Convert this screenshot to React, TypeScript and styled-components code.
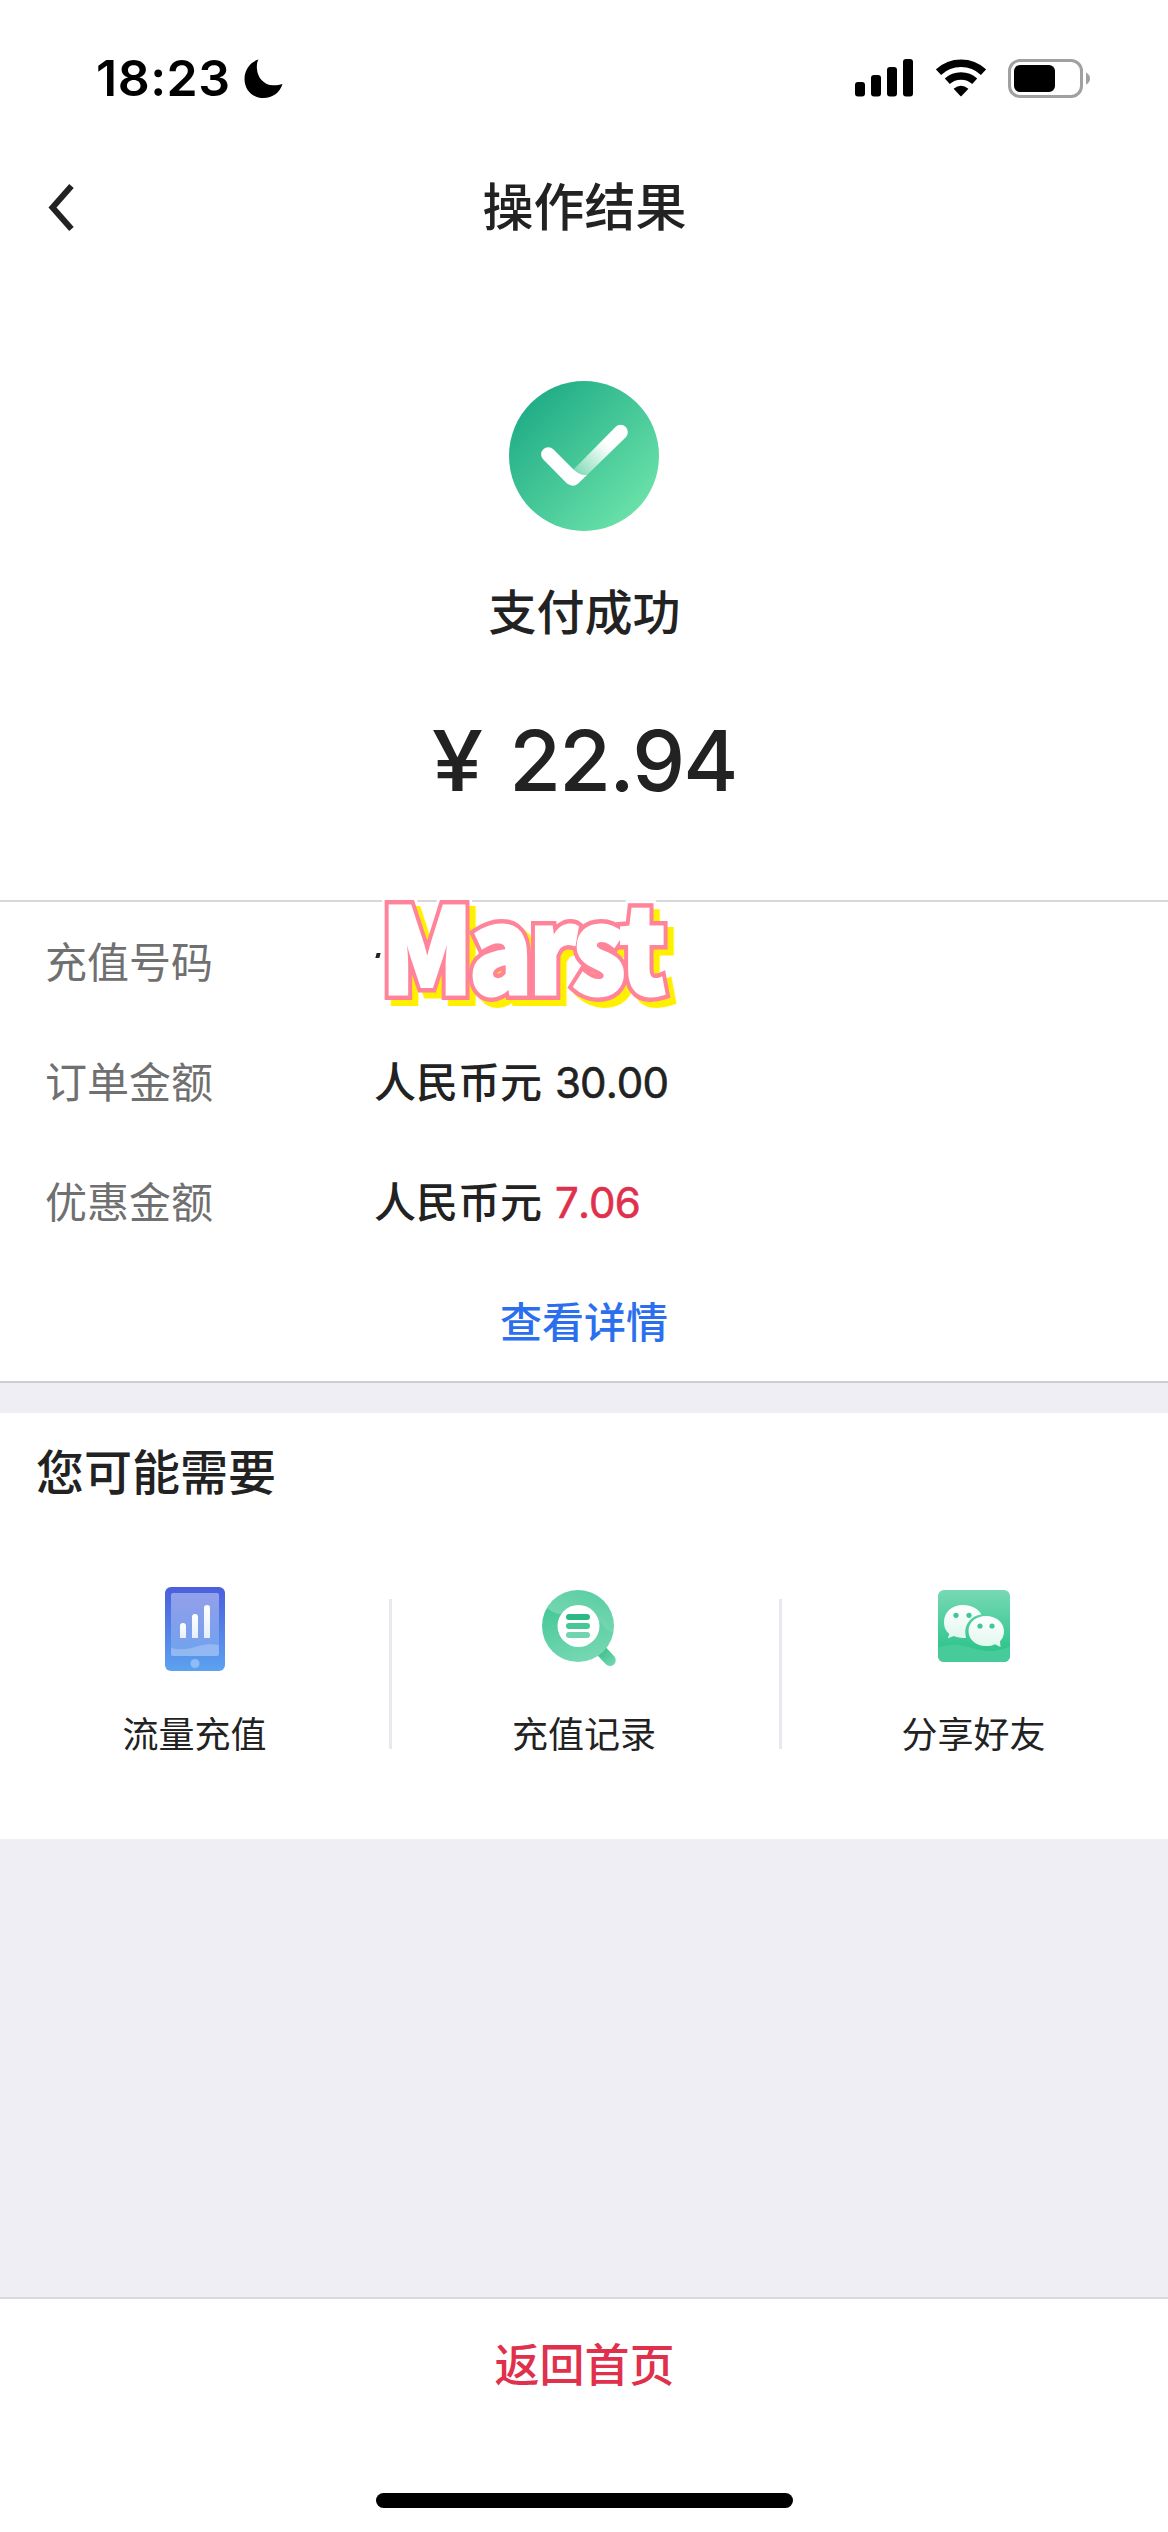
import React from 'react';
import styled, { createGlobalStyle } from 'styled-components';

const GlobalStyle = createGlobalStyle`
  html, body { margin: 0; padding: 0; background: #fff; }
  * { box-sizing: border-box; }
  body { font-family: Inter, "Noto Sans CJK SC", sans-serif; color: #222; }
`;

const Page = styled.div`
  width: 1168px;
  height: 2532px;
  display: flex;
  flex-direction: column;
  background: #efeef4;
  overflow: hidden;
`;

const StatusBar = styled.header`
  height: 141px;
  padding: 15px 77px 0 96px;
  display: flex;
  align-items: center;
  justify-content: space-between;
  background: #fff;
  color: #000;
`;

const StatusGroup = styled.div<{ $gap: number }>`
  display: flex;
  align-items: center;
  gap: ${(p) => p.$gap}px;
`;

const Clock = styled.time`
  font-size: 50px;
  line-height: 60px;
  font-weight: 600;
  letter-spacing: 0.5px;
  width: 134px;
  white-space: nowrap;
`;

const NavBar = styled.nav`
  height: 132px;
  padding: 0 47px;
  display: grid;
  grid-template-columns: 60px 1fr 60px;
  align-items: center;
  background: #fff;
`;

const BackButton = styled.button`
  border: 0;
  padding: 0;
  height: 50px;
  background: none;
  display: flex;
`;

const Title = styled.h1`
  margin: 0;
  padding: 2px 0 0 1px;
  text-align: center;
  font-size: 51px;
  line-height: 60px;
  font-weight: 500;
`;

const Summary = styled.section`
  height: 627px;
  padding-top: 108px;
  display: flex;
  flex-direction: column;
  align-items: center;
  background: #fff;
`;

const ResultText = styled.div`
  margin-top: 52px;
  padding-left: 1px;
  font-size: 48px;
  line-height: 60px;
  font-weight: 500;
`;

const Amount = styled.div`
  margin-top: 68px;
  padding-left: 3px;
  font-size: 84px;
  line-height: 100px;
  font-weight: 500;
  letter-spacing: -1.8px;
  display: flex;
  gap: 30px;
`;

const Currency = styled.span`
  transform: scaleX(1.1);
`;

const Details = styled.section`
  height: 483px;
  border-top: 2px solid #d8d8dc;
  border-bottom: 2px solid #cdcdd3;
  background: #fff;
`;

const DetailRow = styled.div`
  height: 120px;
  padding: 2px 0 0 45px;
  display: grid;
  grid-template-columns: 329px 1fr;
  align-items: center;
  font-size: 42px;
  line-height: 60px;
`;

const Label = styled.span`
  color: #707070;
`;

const Value = styled.span`
  position: relative;
  display: flex;
  gap: 13px;
  font-weight: 500;
`;

const Figure = styled.span<{ $accent?: boolean }>`
  font-weight: 400;
  font-kerning: none;
  letter-spacing: -0.9px;
  -webkit-text-stroke: 0.6px currentColor;
  color: ${(p) => (p.$accent ? '#e0304c' : '#222')};
`;

const HiddenNumber = styled.i`
  width: 4px;
  height: 5px;
  margin: 20px 0 35px 2px;
  background: #222;
  transform: skewX(-15deg);
`;

const Sticker = styled.span`
  position: absolute;
  left: 7px;
  top: -60px;
  isolation: isolate;
  transform: scaleX(0.89);
  transform-origin: left center;
  font-family: "Noto Sans CJK SC", sans-serif;
  font-size: 118px;
  line-height: 140px;
  font-weight: 900;
  letter-spacing: -4.5px;
  color: #fff;
  stroke-linejoin: round;
  -webkit-text-stroke: 3px #fff;

  &::before,
  &::after {
    content: 'Marst';
    position: absolute;
    left: 0;
    top: 0;
    z-index: -1;
  }
  &::before {
    -webkit-text-stroke: 18px #fff;
  }
  &::after {
    -webkit-text-stroke: 12px #ff8399;
    filter: drop-shadow(7px 6px 0 #fff000);
  }
`;

const DetailLink = styled.a`
  height: 119px;
  padding-top: 3px;
  display: flex;
  align-items: center;
  justify-content: center;
  font-size: 42px;
  line-height: 60px;
  font-weight: 500;
  color: #2b6fee;
`;

const Suggestions = styled.section`
  height: 426px;
  margin-top: 30px;
  padding-top: 30px;
  background: #fff;
`;

const SectionTitle = styled.h2`
  margin: 0 0 0 36px;
  font-size: 48px;
  line-height: 60px;
  font-weight: 500;
`;

const ServiceGrid = styled.div`
  margin-top: 66px;
  display: grid;
  grid-template-columns: 389px 390px 389px;
  background:
    linear-gradient(#e8e8ef, #e8e8ef) 389px 30px / 3px 150px no-repeat,
    linear-gradient(#e8e8ef, #e8e8ef) 779px 30px / 3px 150px no-repeat;
`;

const Service = styled.div`
  display: flex;
  flex-direction: column;
  align-items: center;
  gap: 37px;
  height: 192px;
  padding-top: 18px;
`;

const ServiceName = styled.span`
  font-size: 36px;
  line-height: 54px;
`;

const ServiceIcon = styled.div`
  height: 84px;
  display: flex;
  align-items: center;
`;

const Footer = styled.footer`
  height: 235px;
  margin-top: auto;
  padding-top: 37px;
  border-top: 2px solid #d8d8de;
  display: flex;
  flex-direction: column;
  align-items: center;
  background: #fff;
`;

const HomeButton = styled.button`
  border: 0;
  padding: 0 0 0 1px;
  background: none;
  font: 500 45px/60px Inter, "Noto Sans CJK SC", sans-serif;
  color: #e0304c;
`;

const HomeIndicator = styled.div`
  width: 417px;
  height: 15px;
  margin-top: 97px;
  border-radius: 8px;
  background: #000;
`;

const Moon = () => (
  <svg width="39" height="39" viewBox="0 0 39 39">
    <path d="M14.5 .5C13 3 12.700 6 12.900 9.500C13.500 19 20 26 29 26.300C32.500 26.400 35.500 26 38.500 25C36 33.500 28.500 39 19.500 39C8.500 39 .5 31 .5 20C.5 11 6 3 14.500 .5Z" />
  </svg>
);

const Signal = () => (
  <svg width="58" height="38" viewBox="0 0 58 38">
    <rect x="0" y="23" width="10" height="14.500" rx="3" />
    <rect x="16" y="16" width="10" height="21.500" rx="3" />
    <rect x="32" y="8" width="10" height="29.500" rx="3" />
    <rect x="48" y="0" width="10" height="37.500" rx="3" />
  </svg>
);

const Wifi = () => (
  <svg width="50" height="38" viewBox="0 0 50 38">
    <g fill="none" stroke="#000">
      <path d="M2.500 13.200Q12 4.300 25 4.300T47.500 13.200" strokeWidth="7.600" />
      <path d="M11.300 22.200Q17 17 25 17T38.700 22.200" strokeWidth="7.400" />
    </g>
    <path d="M17.600 29.800Q25 23.500 32.400 29.800L25.600 37Q25 37.500 24.400 37Z" />
  </svg>
);

const Battery = () => (
  <svg width="83" height="39" viewBox="0 0 83 39">
    <rect x="1.500" y="1.500" width="72" height="36" rx="10.500" fill="none" stroke="#a0a0a0" strokeWidth="3" />
    <rect x="6" y="6" width="41" height="27" rx="6" />
    <path d="M78 13.500Q82 15.500 82 19.500T78 25.500Z" fill="#a0a0a0" />
  </svg>
);

const Chevron = () => (
  <svg width="30" height="50" viewBox="0 0 30 50">
    <path d="M24.500 4L5.500 25.500L24.500 47" fill="none" stroke="#222" strokeWidth="6" strokeLinejoin="miter" />
  </svg>
);

const SuccessMark = () => (
  <svg width="150" height="150" viewBox="0 0 150 150">
    <defs>
      <linearGradient id="disc" x1=".15" y1=".15" x2=".85" y2=".85">
        <stop offset="0" stopColor="#23ae88" />
        <stop offset="1" stopColor="#68e0a8" />
      </linearGradient>
      <linearGradient id="arm" gradientUnits="userSpaceOnUse" x1="100" y1="63" x2="70" y2="96">
        <stop offset="0" stopColor="#fff" />
        <stop offset=".15" stopColor="#fff" stopOpacity=".93" />
        <stop offset="1" stopColor="#fff" stopOpacity=".3" />
      </linearGradient>
    </defs>
    <circle cx="75" cy="75" r="75" fill="url(#disc)" />
    <path d="M106.500 46a7.200 7.200 0 0 1 10.300 10.200L77.500 94.500C73 96.200 67 93.500 64.500 88.500Z" fill="url(#arm)" />
    <path d="M34.300 68.300a7 7 0 0 1 10 0L64.500 88.500C68.500 92.500 73 94.700 78 93.900L69.500 102.200Q64 107 58 102.600L34.300 78.600a7.200 7.200 0 0 1 0-10.300Z" fill="#fff" />
  </svg>
);

const PhoneIcon = () => (
  <svg width="60" height="84" viewBox="0 0 60 84">
    <defs>
      <linearGradient id="phone" x1="0" y1="0" x2="0" y2="1">
        <stop offset="0" stopColor="#4b5edd" />
        <stop offset="1" stopColor="#5ca2ef" />
      </linearGradient>
      <linearGradient id="column" x1="0" y1="0" x2="0" y2="1">
        <stop offset="0" stopColor="#fff" />
        <stop offset="1" stopColor="#e7eefb" />
      </linearGradient>
      <linearGradient id="screen" x1="0" y1="0" x2="0" y2="1">
        <stop offset="0" stopColor="#fff" stopOpacity=".4" />
        <stop offset="1" stopColor="#fff" stopOpacity=".14" />
      </linearGradient>
    </defs>
    <rect width="60" height="84" rx="6" fill="url(#phone)" />
    <rect x="6" y="6" width="48" height="63" rx="2" fill="url(#screen)" />
    <path d="M6 61C18 64 27 61 34 59C42 56.500 48 57 54 58V67a2 2 0 0 1-2 2H8a2 2 0 0 1-2-2Z" fill="#fff" fillOpacity=".23" />
    <g fill="url(#column)">
      <path d="M15 51V39a3 3 0 0 1 6 0V51Z" />
      <path d="M27 51V30a3 3 0 0 1 6 0V51Z" />
      <path d="M39 51V21a3 3 0 0 1 6 0V51Z" />
    </g>
    <circle cx="30" cy="76.500" r="4.500" fill="#8ebcf4" />
  </svg>
);

const RecordIcon = () => (
  <svg width="84" height="84" viewBox="0 0 84 84">
    <defs>
      <linearGradient id="ring" x1=".3" y1="0" x2=".6" y2="1">
        <stop offset="0" stopColor="#3cc592" />
        <stop offset="1" stopColor="#78d8b4" />
      </linearGradient>
      <linearGradient id="handle" gradientUnits="userSpaceOnUse" x1="58" y1="62" x2="72" y2="78">
        <stop offset="0" stopColor="#38bd89" />
        <stop offset="1" stopColor="#75d8b2" />
      </linearGradient>
      <linearGradient id="shine" x1="0" y1="0" x2="1" y2="0">
        <stop offset="0" stopColor="#fff" stopOpacity=".24" />
        <stop offset="1" stopColor="#fff" stopOpacity=".08" />
      </linearGradient>
    </defs>
    <path d="M58 62.500L68 73.200" stroke="url(#handle)" strokeWidth="11.500" strokeLinecap="round" />
    <circle cx="36" cy="39" r="36" fill="url(#ring)" />
    <path d="M5 21A36 36 0 0 1 71.500 46Q63 43 58 35L20 27Q12 27 5 21Z" fill="url(#shine)" />
    <circle cx="36.500" cy="39" r="21" fill="#fff" />
    <rect x="24" y="27" width="24" height="6" rx="3" fill="#2cb985" />
    <rect x="24" y="36" width="24" height="6" rx="3" fill="#48c796" />
    <rect x="24" y="45" width="24" height="6" rx="3" fill="#70d5ae" />
  </svg>
);

const WechatIcon = () => (
  <svg width="72" height="84" viewBox="0 -3 72 84">
    <defs>
      <linearGradient id="tile" x1="0" y1="0" x2="0" y2="1">
        <stop offset="0" stopColor="#78d9b5" />
        <stop offset=".85" stopColor="#2dc48c" />
        <stop offset="1" stopColor="#2dc48c" />
      </linearGradient>
      <linearGradient id="bubble" x1="0" y1="0" x2="0" y2="1">
        <stop offset="0" stopColor="#fff" />
        <stop offset="1" stopColor="#e0f7ee" />
      </linearGradient>
    </defs>
    <rect width="72" height="72" rx="6" fill="url(#tile)" />
    <path d="M0 57.500C12 52.500 24 55 36 58.500C48 62 60 62 72 56.500V66a6 6 0 0 1-6 6H6a6 6 0 0 1-6-6Z" fill="#48cb9a" />
    <path d="M25 15C14 15 6 22.300 6 32C6 37.500 8 41 11.300 44L9.800 48.300L16 46Q20.500 48 28 48C27 43 26.500 37 30.500 32C34 27 39 25 43.500 24.500C40.500 19 33.500 15 25 15Z" fill="url(#bubble)" />
    <path d="M48 26C38 26 30.500 32.500 30.500 41C30.500 49.700 38 56 48 56C52 56 54.500 55.500 57 54.200L62.500 57L62 51.200C65 48.500 66 45 66 41C66 32.500 58 26 48 26Z" fill="url(#bubble)" />
    <g fill="#3fc896">
      <circle cx="18" cy="25.300" r="2.600" />
      <circle cx="31" cy="25.300" r="2.600" />
      <circle cx="42" cy="36" r="2.600" />
      <circle cx="54" cy="36" r="2.600" />
    </g>
  </svg>
);

const services = [
  { name: '流量充值', icon: <PhoneIcon /> },
  { name: '充值记录', icon: <RecordIcon /> },
  { name: '分享好友', icon: <WechatIcon /> },
];

export default function App() {
  return (
    <>
      <GlobalStyle />
      <Page>
        <StatusBar>
          <StatusGroup $gap={14}>
            <Clock>18:23</Clock>
            <Moon />
          </StatusGroup>
          <StatusGroup $gap={22.5}>
            <Signal />
            <Wifi />
            <Battery />
          </StatusGroup>
        </StatusBar>
        <NavBar>
          <BackButton aria-label="返回"><Chevron /></BackButton>
          <Title>操作结果</Title>
        </NavBar>
        <Summary>
          <SuccessMark />
          <ResultText>支付成功</ResultText>
          <Amount><Currency>¥</Currency><span>22.94</span></Amount>
        </Summary>
        <Details>
          <DetailRow>
            <Label>充值号码</Label>
            <Value>
              <HiddenNumber />
              <Sticker>Marst</Sticker>
            </Value>
          </DetailRow>
          <DetailRow>
            <Label>订单金额</Label>
            <Value>人民币元<Figure>30.00</Figure></Value>
          </DetailRow>
          <DetailRow>
            <Label>优惠金额</Label>
            <Value>人民币元<Figure $accent>7.06</Figure></Value>
          </DetailRow>
          <DetailLink>查看详情</DetailLink>
        </Details>
        <Suggestions>
          <SectionTitle>您可能需要</SectionTitle>
          <ServiceGrid>
            {services.map((s) => (
              <Service key={s.name}>
                <ServiceIcon>{s.icon}</ServiceIcon>
                <ServiceName>{s.name}</ServiceName>
              </Service>
            ))}
          </ServiceGrid>
        </Suggestions>
        <Footer>
          <HomeButton>返回首页</HomeButton>
          <HomeIndicator />
        </Footer>
      </Page>
    </>
  );
}
